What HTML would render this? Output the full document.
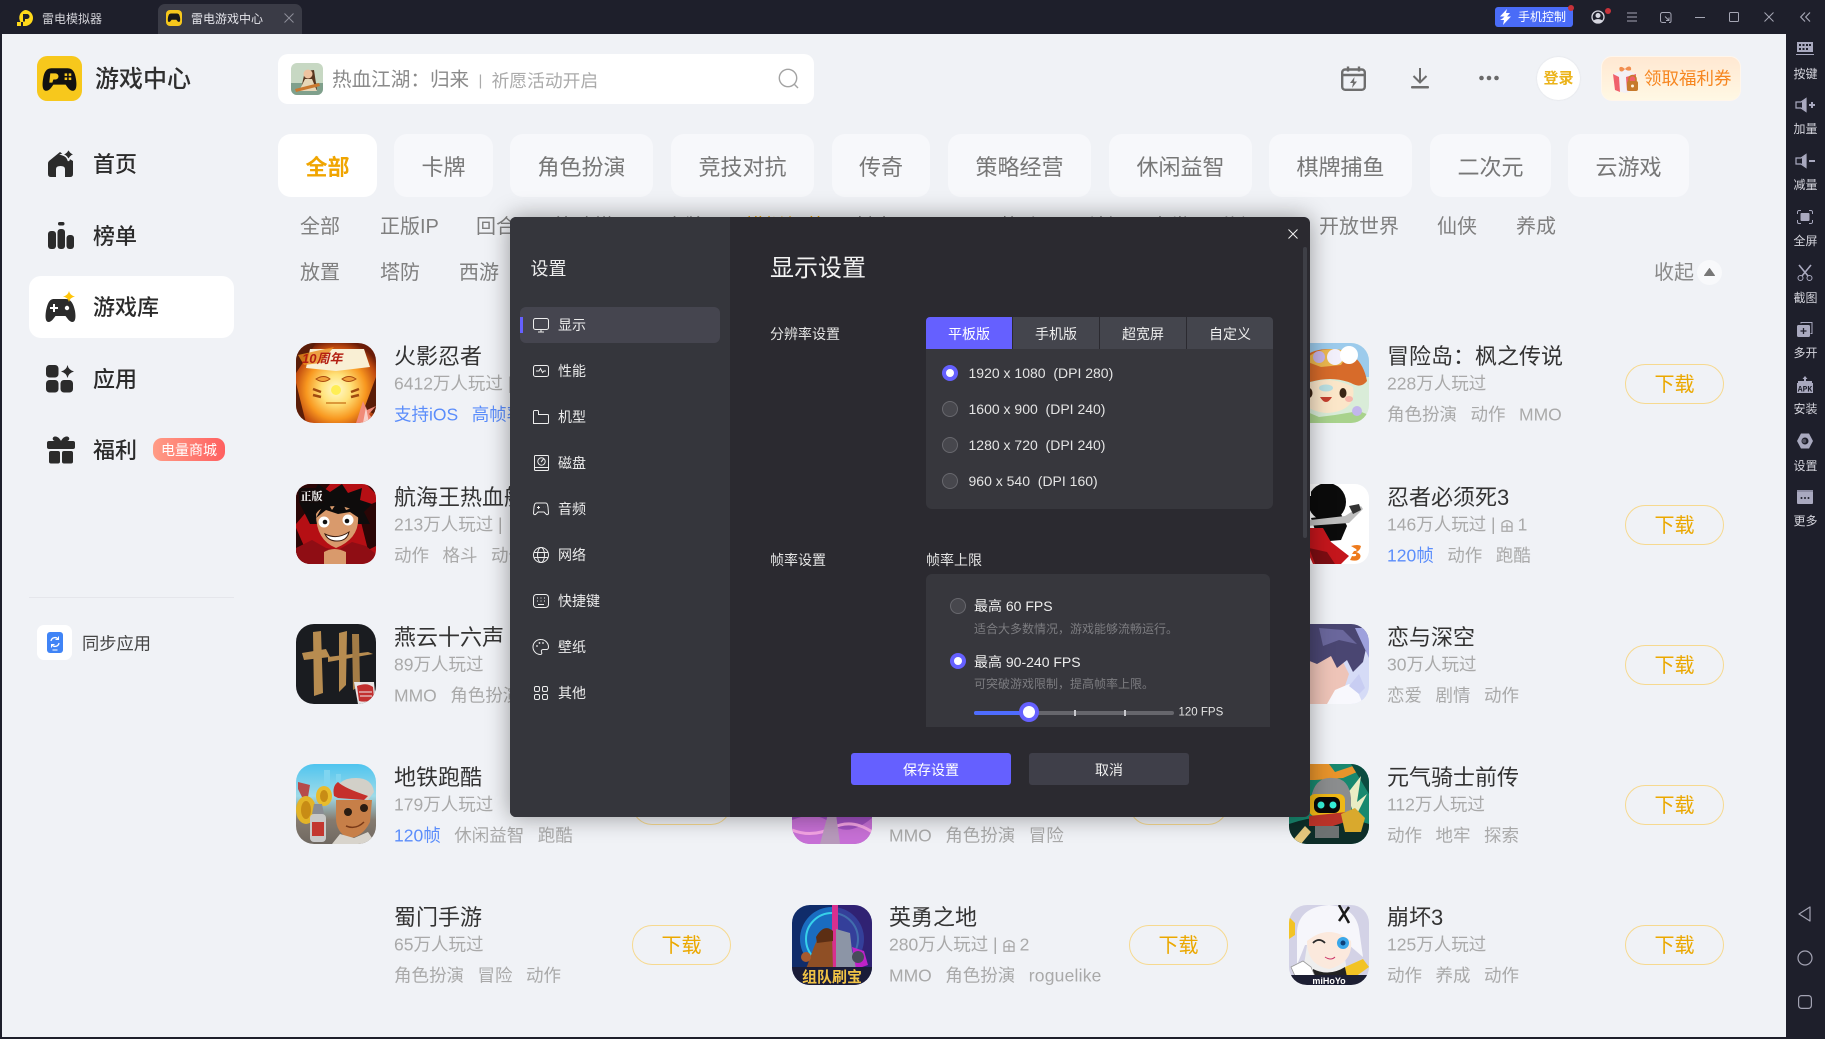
<!DOCTYPE html>
<html lang="zh-CN">
<head>
<meta charset="utf-8">
<title>雷电游戏中心</title>
<style>
html,body{margin:0;padding:0;width:1825px;height:1039px;overflow:hidden;background:#1e1f2b}
body{position:relative;font-family:"Liberation Sans","Noto Sans CJK SC",sans-serif}
.a{position:absolute}
.t{position:absolute;white-space:nowrap;line-height:1;transform:translateY(-50%)}
svg{display:block;overflow:visible}
.a.i{border-radius:18px;overflow:hidden;width:80px;height:80px}
.i svg{overflow:hidden}
.c{position:absolute;top:134px;height:63px;background:#f7f8fb;border-radius:13px;text-align:center;line-height:68px;font-size:22px;color:#777}
.st{font-size:20px;color:#7f7f7f;margin-top:1px}
.gt{font-size:22px;color:#333;margin-top:1px}
.gs{font-size:17.5px;color:#a9a9a9}
.gg{font-size:17.5px;color:#a9a9a9;display:flex;gap:13.5px;margin-top:1px}
.bl{color:#5b8dfb}
.b{position:absolute;width:99px;height:40px;box-sizing:border-box;border:1px solid #f6d98f;border-radius:20px;color:#eba800;font-size:20px;text-align:center;line-height:40px}
.n{font-size:22px;color:#2b2b2b;font-weight:500;margin-top:1px}
.s{position:absolute;left:1786px;width:39px;text-align:center;font-size:12px;color:#d4d4dc;line-height:1;transform:translateY(-50%);margin-top:.5px}
.m{font-size:14px;color:#ececec}
.mt{font-size:14px;color:#e4e4e4}
.r{position:absolute;width:16px;height:16px;border-radius:50%;box-sizing:border-box;background:#47474d;border:1px solid #68686e}
.r.on{background:#6560ff;border:0}
.r.on:after{content:"";position:absolute;left:4px;top:4px;width:8px;height:8px;border-radius:50%;background:#fff}
.tb{position:absolute;top:317px;height:32px;width:86px;background:#44454d;color:#eee;font-size:14px;text-align:center;line-height:34px}
</style>
</head>
<body>
<!-- main background -->
<div class="a" style="left:2px;top:34px;width:1784px;height:1003px;background:#f0f2f6"></div>
<!-- title bar -->
<div class="a" style="left:158px;top:4px;width:144px;height:30px;background:#3a3b46;border-radius:7px 7px 0 0"></div>
<svg class="a" style="left:17px;top:10px" width="16" height="16" viewBox="0 0 16 16"><path d="M8 0a8 8 0 0 1 0 16H6v-4H3.500A8 8 0 0 1 8 0z" fill="#ffd91a"/><rect y="12" width="4" height="4" fill="#ffd91a"/><path d="M6 4h4a2.500 2.500 0 0 1 0 5H8v2.500H6z" fill="#1e1f2b"/></svg>
<div class="t" style="left:42px;top:19px;font-size:12px;color:#d2d2d8">雷电模拟器</div>
<svg class="a" style="left:166px;top:10px" width="16" height="16" viewBox="0 0 16 16"><rect width="16" height="16" rx="4" fill="#f7c81c"/><path d="M5 3.500h6c2 0 2.600 1.800 3 4 .4 2.200.2 4.500-1 4.500-1.200 0-1.900-1.300-2.600-2.200H5.600C4.900 10.700 4.200 12 3 12c-1.200 0-1.400-2.300-1-4.500.4-2.200 1-4 3-4z" fill="#1a1a1a"/></svg>
<div class="t" style="left:191px;top:19px;font-size:12px;color:#e4e4ea">雷电游戏中心</div>
<svg class="a" style="left:284px;top:13px" width="10" height="10" viewBox="0 0 10 10"><path d="M.5.500l9 9M9.500.500l-9 9" stroke="#8d8e99" fill="none"/></svg>

<div class="a" style="left:1495px;top:7px;width:78px;height:20px;background:#4a6cf7;border-radius:3px"></div>
<svg class="a" style="left:1499px;top:9px" width="13" height="16" viewBox="0 0 13 16"><path d="M8 0L1 7.500h4.500L3.500 9.500 1 11h4l-1 5 8-8.500H8l3-3.500H7z" fill="#fff"/></svg>
<div class="t" style="left:1518px;top:17px;font-size:12px;color:#fff">手机控制</div>
<div class="a" style="left:1568px;top:5px;width:6px;height:6px;border-radius:50%;background:#c8323a"></div>
<svg class="a" style="left:1591px;top:10px" width="14" height="14" viewBox="0 0 14 14"><circle cx="7" cy="7" r="6" fill="none" stroke="#d6d6e0" stroke-width="1.300"/><circle cx="7" cy="5.500" r="2.500" fill="#d6d6e0"/><path d="M2.500 11c1-2.500 8-2.500 9 0-2 2.500-7 2.500-9 0z" fill="#d6d6e0"/></svg>
<div class="a" style="left:1605px;top:8px;width:6px;height:6px;border-radius:50%;background:#c8323a"></div>
<svg class="a" style="left:1626px;top:12px" width="12" height="10" viewBox="0 0 12 10"><path d="M1 1h10M1 5h10M1 9h10" stroke="#a5a6b4" stroke-width="1"/></svg>
<svg class="a" style="left:1660px;top:12px" width="12" height="11" viewBox="0 0 12 11"><path d="M7 .500H2.500a2 2 0 0 0-2 2v6a2 2 0 0 0 2 2H6M9 10.500h1a1.500 1.500 0 0 0 1-1.500V2.500a2 2 0 0 0-2-2H7M5 4.500l4 4M9 5.500v3H6" stroke="#a5a6b4" fill="none"/></svg>
<svg class="a" style="left:1695px;top:17px" width="10" height="2"><rect width="10" height="1" fill="#a5a6b4"/></svg>
<svg class="a" style="left:1729px;top:12px" width="10" height="10" viewBox="0 0 10 10"><rect x=".5" y=".5" width="9" height="9" rx="1" stroke="#a5a6b4" fill="none"/></svg>
<svg class="a" style="left:1764px;top:12px" width="10" height="10" viewBox="0 0 10 10"><path d="M.5.500l9 9M9.500.500l-9 9" stroke="#a5a6b4" fill="none"/></svg>
<svg class="a" style="left:1800px;top:12px" width="11" height="10" viewBox="0 0 11 10"><path d="M5 .500L.7 5 5 9.500M10 .500L5.700 5 10 9.500" stroke="#a5a6b4" fill="none" stroke-width="1.200"/></svg>

<!-- sidebar -->
<svg class="a" style="left:37px;top:56px" width="45" height="45" viewBox="0 0 44 44"><rect width="44" height="44" rx="10" fill="#f7c81c"/><path d="M14 12h16c5 0 7 4 8 10 1 6 1 12-3 12-3 0-5-3-7-6H16c-2 3-4 6-7 6-4 0-4-6-3-12 1-6 3-10 8-10z" fill="#111"/><path d="M13 17h5a3 3 0 0 1 0 6h-2l-1 3h-3z" fill="#f7c81c"/><rect x="27" y="17" width="2.500" height="2.500" fill="#f7c81c"/><rect x="31" y="17" width="2.500" height="2.500" fill="#f7c81c"/><rect x="27" y="21" width="2.500" height="2.500" fill="#f7c81c"/><rect x="31" y="21" width="2.500" height="2.500" fill="#f7c81c"/></svg>
<div class="t" style="left:95px;top:79.500px;font-size:24px;color:#2f2f2f;font-weight:500">游戏中心</div>

<svg class="a" style="left:48px;top:148px" width="27" height="30" viewBox="0 0 27 30"><path d="M12 4L1 13Q0 14 0 16V26Q0 29 3 29H8V21Q8 18 12.500 18Q17 18 17 21V29H22Q25 29 25 26V13L20 10Z" fill="#2b2b2b"/><path d="M20.500 0Q21.500 5 27 6.500Q21.500 8 20.500 13Q19.500 8 14 6.500Q19.500 5 20.500 0Z" fill="#2b2b2b" stroke="#f0f2f6" stroke-width="1.500"/></svg>
<div class="t n" style="left:93px;top:164px">首页</div>

<svg class="a" style="left:48px;top:222px" width="26" height="27" viewBox="0 0 26 27"><rect x="0" y="9" width="8" height="18" rx="3" fill="#2b2b2b"/><rect x="9.500" y="7" width="7.500" height="20" rx="3" fill="#2b2b2b"/><rect x="10" y="0" width="6.500" height="3.500" rx="1.700" fill="#2b2b2b"/><rect x="18.500" y="13" width="7.500" height="14" rx="3" fill="#2b2b2b"/></svg>
<div class="t n" style="left:93px;top:236px">榜单</div>

<div class="a" style="left:29px;top:276px;width:205px;height:62px;background:#fff;border-radius:12px"></div>
<svg class="a" style="left:45px;top:291px" width="32" height="32" viewBox="0 0 32 32"><path d="M9 8h12c5 0 7.500 5 9 12 1 6 .5 11-2.500 11-3 0-5-3.500-7-6H10.500c-2 2.500-4 6-7 6-3 0-3.500-5-2.500-11C2.500 13 4 8 9 8z" fill="#2b2b2b"/><path d="M9 13v8M5 17h8" stroke="#fff" stroke-width="2"/><circle cx="22" cy="17" r="2.200" fill="#fff"/><path d="M24 0Q25 4.500 30 5.500Q25 6.500 24 11Q23 6.500 18 5.500Q23 4.500 24 0Z" fill="#ffc50a"/></svg>
<div class="t n" style="left:93px;top:307px">游戏库</div>

<svg class="a" style="left:46px;top:365px" width="28" height="28" viewBox="0 0 28 28"><rect width="12.500" height="12.500" rx="3.500" fill="#2b2b2b"/><rect y="15" width="12.500" height="12.500" rx="3.500" fill="#2b2b2b"/><rect x="14.500" y="15" width="12.500" height="12.500" rx="3.500" fill="#2b2b2b"/><path d="M21.500 0Q22.500 5 28 6.500Q22.500 8 21.500 13Q20.500 8 15 6.500Q20.500 5 21.500 0Z" fill="#2b2b2b"/></svg>
<div class="t n" style="left:93px;top:379px">应用</div>

<svg class="a" style="left:47px;top:436px" width="28" height="28" viewBox="0 0 28 28"><rect x="0" y="5" width="28" height="8" rx="2" fill="#2b2b2b"/><rect x="2" y="15" width="11" height="12.500" rx="2" fill="#2b2b2b"/><rect x="15" y="15" width="11" height="12.500" rx="2" fill="#2b2b2b"/><path d="M14 5C12 1 9 0 7 .7 4.500 2 6 5 8 5zM14 5c2-4 5-5 7-4.300 2.500 1.300 1 4.300-1 4.300z" fill="#2b2b2b"/></svg>
<div class="t n" style="left:93px;top:450px">福利</div>
<div class="a" style="left:153px;top:438px;width:72px;height:23px;border-radius:9px;background:linear-gradient(90deg,#ff9c86,#ff6060);color:#fff;font-size:14px;text-align:center;line-height:24px">电量商城</div>

<div class="a" style="left:29px;top:597px;width:205px;height:1px;background:#e5e6eb"></div>
<div class="a" style="left:37px;top:625px;width:35px;height:35px;border-radius:7px;background:#fff"></div>
<svg class="a" style="left:47px;top:632px" width="16" height="21" viewBox="0 0 16 21"><rect width="16" height="21" rx="3" fill="#4084f6"/><path d="M4 9a4 4 0 0 1 7-2M12 11a4 4 0 0 1-7 2" stroke="#fff" stroke-width="1.300" fill="none"/><path d="M11.500 4.500v3h-3M4.500 15.500v-3h3" stroke="#fff" stroke-width="1" fill="none"/><rect x="5.500" y="17.500" width="5" height="1" fill="#fff"/></svg>
<div class="t" style="left:82px;top:644px;font-size:17.250px;color:#444">同步应用</div>

<!-- search -->
<div class="a" style="left:278px;top:54px;width:536px;height:50px;background:#fff;border-radius:10px"></div>
<svg class="a" style="left:291px;top:63px;border-radius:6px;overflow:hidden" width="32" height="32" viewBox="0 0 32 32"><rect width="32" height="32" fill="#c7d8c3"/><rect y="20" width="32" height="12" fill="#7fa08c"/><path d="M10 26L14 8 23 7l3 20z" fill="#57351f"/><circle cx="17" cy="11" r="4.500" fill="#eec3a0"/><path d="M8 28L14 16h7l5 12z" fill="#e6d6b8"/><path d="M4 26L28 20l1 3-24 6z" fill="#c9782f"/></svg>
<div class="t" style="left:332px;top:80.500px;font-size:19.600px;color:#8a8a8a">热血江湖：归来</div>
<div class="t" style="left:478.500px;top:81px;font-size:15px;color:#aaa">|</div>
<div class="t" style="left:491.500px;top:81.500px;font-size:17.800px;color:#ababab">祈愿活动开启</div>
<svg class="a" style="left:778px;top:68px" width="22" height="22" viewBox="0 0 22 22"><circle cx="10" cy="10" r="8.700" stroke="#a3a3a3" stroke-width="1.400" fill="none"/><path d="M16.500 16.500L20 20" stroke="#a3a3a3" stroke-width="1.400" fill="none"/></svg>

<!-- top right -->
<svg class="a" style="left:1341px;top:66px" width="25" height="25" viewBox="0 0 25 25"><rect x="1.200" y="3.500" width="22.600" height="20.300" rx="3" stroke="#6e6e6e" stroke-width="2.400" fill="none"/><path d="M1.500 9h22M7 0.500v5M18 0.500v5" stroke="#6e6e6e" stroke-width="2.400" fill="none"/><path d="M13.500 11L9 17h3l-1 5 5-6.500h-3z" fill="#6e6e6e"/></svg>
<svg class="a" style="left:1411px;top:68px" width="18" height="21" viewBox="0 0 18 21"><path d="M9 0v14M2.500 8L9 14.500 15.500 8" stroke="#6e6e6e" stroke-width="2" fill="none"/><rect x="0" y="18" width="18" height="2.500" rx="1" fill="#6e6e6e"/></svg>
<svg class="a" style="left:1479px;top:75px" width="20" height="6" viewBox="0 0 20 6"><circle cx="2.500" cy="3" r="2.300" fill="#6a6a6a"/><circle cx="10" cy="3" r="2.300" fill="#6a6a6a"/><circle cx="17.500" cy="3" r="2.300" fill="#6a6a6a"/></svg>
<div class="a" style="left:1537px;top:57px;width:43px;height:43px;border-radius:50%;background:#fff;box-shadow:0 0 2px rgba(0,0,0,.08);color:#ebb31a;font-size:15px;font-weight:700;text-align:center;line-height:44px">登录</div>
<div class="a" style="left:1601px;top:56px;width:140px;height:45px;box-sizing:border-box;border:1px solid #fff6ec;border-radius:11px;background:linear-gradient(180deg,#ffe8d2,#fff8e4)"></div>
<svg class="a" style="left:1612px;top:65px" width="26" height="28" viewBox="0 0 26 28"><path d="M1 9L13 4l11 5v16l-11 3-10-3z" fill="#f3f0f5"/><path d="M1 9l6 3 1 15-5-2zM14 12l10-3v8l-9 9z" fill="#f0616c"/><path d="M13 4C9 0 6 2 8 6c2 1 3 .5 5-2zM13 4c3-4 7-3 6 1-2 1-4 1-6-1z" fill="#f28e4e"/><rect x="15" y="16" width="11" height="10" rx="2" fill="#c77a2c"/><path d="M17 16.500v-2.500a3.500 3.500 0 0 1 7 0v2.500" stroke="#c77a2c" stroke-width="1.600" fill="none"/><circle cx="20.500" cy="21" r="1.500" fill="#fff3df"/></svg>
<div class="t" style="left:1644px;top:78.500px;font-size:17.500px;color:#f6861f">领取福利券</div>

<!-- category chips -->
<div class="c" style="left:278px;width:99px;background:#fff;color:#f0a500;font-weight:700">全部</div>
<div class="c" style="left:394px;width:99px">卡牌</div>
<div class="c" style="left:510px;width:143px">角色扮演</div>
<div class="c" style="left:671px;width:143px">竞技对抗</div>
<div class="c" style="left:832px;width:98px">传奇</div>
<div class="c" style="left:948px;width:143px">策略经营</div>
<div class="c" style="left:1109px;width:143px">休闲益智</div>
<div class="c" style="left:1269px;width:143px">棋牌捕鱼</div>
<div class="c" style="left:1430px;width:121px">二次元</div>
<div class="c" style="left:1568px;width:121px">云游戏</div>

<!-- sub tags -->
<div class="t st" style="left:300px;top:226px">全部</div>
<div class="t st" style="left:380px;top:226px">正版IP</div>
<div class="t st" style="left:476px;top:226px">回合</div>
<div class="t st" style="left:554px;top:226px">策略塔</div>
<div class="t st" style="left:665px;top:226px">卡牌</div>
<div class="t st" style="left:745px;top:226px;color:#f0a500">模拟经营</div>
<div class="t st" style="left:854px;top:226px">射击</div>
<div class="t st" style="left:1000px;top:226px">格斗</div>
<div class="t st" style="left:1085px;top:226px">科幻</div>
<div class="t st" style="left:1150px;top:226px">末世</div>
<div class="t st" style="left:1220px;top:226px">休闲</div>
<div class="t st" style="left:1319px;top:226px">开放世界</div>
<div class="t st" style="left:1437px;top:226px">仙侠</div>
<div class="t st" style="left:1516px;top:226px">养成</div>
<div class="t st" style="left:300px;top:272px">放置</div>
<div class="t st" style="left:380px;top:272px">塔防</div>
<div class="t st" style="left:459px;top:272px">西游</div>
<div class="t st" style="left:1654px;top:272px;color:#8a8a8a">收起</div>
<div class="a" style="left:1697px;top:260px;width:25px;height:25px;border-radius:50%;background:#f8f9fb"></div>
<svg class="a" style="left:1704px;top:268px" width="11" height="8" viewBox="0 0 11 8"><path d="M5.500.500L10.500 7.500H.5z" fill="#777" stroke="#777" stroke-linejoin="round"/></svg>

<!-- GAME ROWS: column 1 -->
<div class="a i" style="left:296px;top:343px"><svg width="80" height="80" viewBox="0 0 80 80"><defs><radialGradient id="n1" cx=".5" cy=".58" r=".62"><stop offset="0" stop-color="#fffbd0"/><stop offset=".3" stop-color="#ffe27a"/><stop offset=".6" stop-color="#f8971f"/><stop offset=".85" stop-color="#c04a0f"/><stop offset="1" stop-color="#6a1c08"/></radialGradient></defs><rect width="80" height="80" fill="url(#n1)"/><path d="M0 0h20L0 30zM0 40l10 40H0zM80 34L68 66l12 6z" fill="#5a1d08"/><path d="M14 6h54l6 18-34 4-30-3z" fill="#f9efd4"/><path d="M2 12L38 4 24 20 8 22z" fill="#e88b1c" opacity=".8"/><text x="6" y="20" font-size="13" font-style="italic" font-weight="700" fill="#b31f12" font-family="Liberation Sans,Noto Sans CJK SC,sans-serif">10周年</text><path d="M20 36q8-5 14 0-7 5-14 0zM46 36q7-5 14 0-8 5-14 0z" fill="#f2a13a" stroke="#a8490e"/><circle cx="40" cy="47" r="5" fill="#ffee55"/><path d="M17 46l8 3M17 52l8 2M63 46l-8 3M63 52l-8 2" stroke="#a04a10" stroke-width="2.500"/><path d="M30 60h20" stroke="#d08024" stroke-width="1.500"/><path d="M62 74l5-16 4 9 9-4-7 8 7 9H60z" fill="#f08a78"/><path d="M67 80l3-16 3 16" fill="#fff" opacity=".6"/></svg></div>
<div class="t gt" style="left:394px;top:356px">火影忍者</div>
<div class="t gs" style="left:394px;top:384px">6412万人玩过 |</div>
<div class="t gg" style="left:394px;top:414px"><span class="bl">支持iOS</span><span class="bl">高帧率</span><span>动作</span></div>

<div class="a i" style="left:296px;top:484px;border-radius:14px"><svg width="80" height="80" viewBox="0 0 80 80"><rect width="80" height="80" fill="#b50f14"/><path d="M0 0h34L0 40zM0 44l16 36H0zM62 26l18-8v44l-8 4zM70 0h10v10z" fill="#2a0606"/><path d="M4 20L2 4 16 12 22 0l12 8L46 0l6 9 14-5-2 12 12 4-8 8 6 12H14z" fill="#0e0c0c"/><path d="M20 30q4-8 20-8t22 10q2 22-22 32-20-8-20-34z" fill="#d99a6c"/><path d="M20 34L30 16l6 10 8-12 6 12 12-4 4 14-12-8-12 2-12-4z" fill="#0e0c0c"/><circle cx="28" cy="38" r="5.500" fill="#fff"/><circle cx="52" cy="36" r="5.500" fill="#fff"/><circle cx="29" cy="38" r="2.300" fill="#111"/><circle cx="51" cy="37" r="2.300" fill="#111"/><path d="M29 50q12 6 24-2-2 9-12 9-9 0-12-7z" fill="#fff" stroke="#3a1c10"/><path d="M0 80V64l16-8 14 8 12 2 14-8 14 4 10 8v10z" fill="#8f0d14"/><path d="M28 68q10-6 22 0v12H28z" fill="#d99a6c"/><rect x="3" y="4" width="25" height="15" fill="#120a0a"/><text x="4.500" y="16" font-size="11" font-weight="700" fill="#fff" font-family="Noto Serif CJK SC,serif">正版</text></svg></div>
<div class="t gt" style="left:394px;top:497px">航海王热血航线</div>
<div class="t gs" style="left:394px;top:525px">213万人玩过 |</div>
<div class="t gg" style="left:394px;top:555px"><span>动作</span><span>格斗</span><span>动作</span></div>

<div class="a i" style="left:296px;top:624px"><svg width="80" height="80" viewBox="0 0 80 80"><rect width="80" height="80" fill="#1a1c20"/><path d="M6 29l24-4 4 8-26 3z" fill="#b78c50"/><path d="M17 8l8-1 2 62-9 3z" fill="#b78c50"/><path d="M32 33l40-5 5 2-45 8z" fill="#b78c50"/><path d="M43 9l8-2-1 54-7 7z" fill="#b78c50"/><path d="M56 10l7 0 1 52-7 4z" fill="#a47c46"/><path d="M58 58h20l2 22H62z" fill="#e8e4e4"/><path d="M61 62q10-4 16 1l1 12q-8 4-15 2z" fill="#c22f2f"/><path d="M63 68h13M64 72h12" stroke="#eee"/></svg></div>
<div class="t gt" style="left:394px;top:637px">燕云十六声</div>
<div class="t gs" style="left:394px;top:665px">89万人玩过</div>
<div class="t gg" style="left:394px;top:695px"><span>MMO</span><span>角色扮演</span><span>动作</span></div>

<div class="a i" style="left:296px;top:764px"><svg width="80" height="80" viewBox="0 0 80 80"><defs><linearGradient id="n4" x1="0" y1="0" x2="0" y2="1"><stop offset="0" stop-color="#4fc4ef"/><stop offset=".4" stop-color="#9edbe9"/><stop offset=".7" stop-color="#857b70"/><stop offset="1" stop-color="#6f6860"/></linearGradient></defs><rect width="80" height="80" fill="url(#n4)"/><path d="M28 6h6v16h-6zM40 10h5v12h-5z" fill="#7fd5f0"/><path d="M2 18l12 3-2 12-6 0-4-8z" fill="#b64b4b"/><ellipse cx="10" cy="46" rx="10" ry="14" fill="#e3b428"/><ellipse cx="10" cy="46" rx="5" ry="9" fill="#c88c15"/><ellipse cx="28" cy="32" rx="8" ry="10" fill="#e8bc2c"/><ellipse cx="28" cy="32" rx="4" ry="6" fill="#c88c15"/><rect x="14" y="50" width="16" height="28" rx="4" fill="#c8c8c8"/><path d="M16 58h12v14H16z" fill="#c3362f"/><path d="M18 40h8l2 10H16z" fill="#8a8d94"/><path d="M38 32q2-18 22-18 16 0 18 14l-6 8z" fill="#d2d0c8"/><path d="M38 32q-2-10 4-14 6 6 30 14l-4 4-26-2z" fill="#c5302b"/><path d="M40 36h36l-2 22q-8 16-22 16-12-6-12-20z" fill="#c77f48"/><circle cx="52" cy="48" r="4" fill="#2a1c12"/><circle cx="68" cy="44" r="4" fill="#2a1c12"/><path d="M50 62q10 4 18-4" stroke="#7a3a18" stroke-width="1.500" fill="none"/><path d="M36 80l8-10 14 4 14-6 8 12z" fill="#d8d4cc"/></svg></div>
<div class="t gt" style="left:394px;top:777px">地铁跑酷</div>
<div class="t gs" style="left:394px;top:805px">179万人玩过</div>
<div class="t gg" style="left:394px;top:835px"><span class="bl">120帧</span><span>休闲益智</span><span>跑酷</span></div>
<div class="b" style="left:632px;top:785px">下载</div>

<div class="t gt" style="left:394px;top:917px">蜀门手游</div>
<div class="t gs" style="left:394px;top:945px">65万人玩过</div>
<div class="t gg" style="left:394px;top:975px"><span>角色扮演</span><span>冒险</span><span>动作</span></div>
<div class="b" style="left:632px;top:925px">下载</div>

<!-- column 2 -->
<div class="a i" style="left:792px;top:764px"><svg width="80" height="80" viewBox="0 0 80 80"><rect width="80" height="80" fill="#a050c0"/><path d="M0 56q24-10 40 4t40-6v26H0z" fill="#c770d6"/><path d="M0 66q20 8 40-2t40 4" stroke="#f5a5e5" stroke-width="3" fill="none"/><path d="M28 80l8-30h8l4 30z" fill="#b89abc"/></svg></div>
<div class="t gg" style="left:889px;top:835px"><span>MMO</span><span>角色扮演</span><span>冒险</span></div>
<div class="b" style="left:1129px;top:785px">下载</div>

<div class="a i" style="left:792px;top:905px"><svg width="80" height="80" viewBox="0 0 80 80"><rect width="80" height="80" fill="#102c6a"/><circle cx="40" cy="34" r="32" fill="#1a6cc0"/><circle cx="40" cy="34" r="26" fill="none" stroke="#37d1ea" stroke-width="2"/><path d="M42 0h38v80H42z" fill="#4a1c7a" opacity=".55"/><path d="M40 0h6v80h-6z" fill="#d7308f"/><path d="M14 64l8-22q6-16 18-14l1 36z" fill="#8f4f25"/><path d="M24 32q8-14 17-6v10l-16 2z" fill="#5c2e14"/><path d="M44 24l14 4 2 18 6 18H44z" fill="#8c95a6"/><path d="M60 42l12 4 4 14-12 4z" fill="#c022c9"/><circle cx="66" cy="52" r="6" fill="#484c5a"/><circle cx="14" cy="52" r="5" fill="#a75a2e"/><rect y="62" width="80" height="18" fill="#1a1c38"/><text x="40" y="77" text-anchor="middle" font-size="15" font-weight="700" fill="#f1c345" font-family="Noto Sans CJK SC,sans-serif">组队刷宝</text></svg></div>
<div class="t gt" style="left:889px;top:917px">英勇之地</div>
<div class="t gs" style="left:889px;top:945px;display:flex;align-items:center;gap:4px"><span>280万人玩过 |</span><svg width="14" height="14" viewBox="0 0 14 14"><path d="M2 5q5-5 10 0v8H2zM2 8.500h10M7 5v8" stroke="#a9a9a9" stroke-width="1.300" fill="none"/></svg><span>2</span></div>
<div class="t gg" style="left:889px;top:975px"><span>MMO</span><span>角色扮演</span><span style="letter-spacing:.2px">roguelike</span></div>
<div class="b" style="left:1129px;top:925px">下载</div>

<!-- column 3 -->
<div class="a i" style="left:1289px;top:343px"><svg width="80" height="80" viewBox="0 0 80 80"><rect width="80" height="80" fill="#d9ecd8"/><path d="M0 0h80v34H0z" fill="#9ccbec"/><path d="M4 38Q8 6 40 6t38 32q-6 8-16 2-20-8-44 0-8 6-14-2z" fill="#d76b2a"/><path d="M16 18q8-12 28-12 10 0 16 4l-8 12-20 2z" fill="#ecb84e"/><circle cx="46" cy="14" r="8" fill="#f3f0fb"/><circle cx="60" cy="12" r="9" fill="#fff"/><circle cx="30" cy="14" r="6" fill="#c6b4e8"/><path d="M12 44q26-14 52 0 4 24-26 26-28-2-26-26z" fill="#fbe6c9"/><ellipse cx="20" cy="50" rx="3.500" ry="5" fill="#3a2414"/><ellipse cx="54" cy="50" rx="3.500" ry="5" fill="#3a2414"/><ellipse cx="37" cy="45" rx="7" ry="3.500" fill="#b9dfe2"/><path d="M31 54q6 10 12 0z" fill="#c43f2e"/><ellipse cx="13" cy="57" rx="4" ry="3" fill="#f7b4a8"/><ellipse cx="60" cy="56" rx="4" ry="3" fill="#f7b4a8"/><path d="M0 72l16-4 14 6 16-2 24-4 10 4v8H0z" fill="#a8d28c"/><circle cx="68" cy="68" r="5" fill="#c2b6ec"/></svg></div>
<div class="t gt" style="left:1387px;top:356px">冒险岛：枫之传说</div>
<div class="t gs" style="left:1387px;top:384px">228万人玩过</div>
<div class="t gg" style="left:1387px;top:414px"><span>角色扮演</span><span>动作</span><span>MMO</span></div>
<div class="b" style="left:1625px;top:364px">下载</div>

<div class="a i" style="left:1289px;top:484px;border-radius:14px"><svg width="80" height="80" viewBox="0 0 80 80"><rect width="80" height="80" fill="#fff"/><circle cx="38" cy="18" r="19" fill="#0b0b0b"/><path d="M16 4h6v8h-6z" fill="#fff"/><path d="M22 34l30-4 6 12-6 14-22 2z" fill="#0b0b0b"/><path d="M4 38l52-6 16-10 2 3-14 14-56 4z" fill="#bdbdbd"/><path d="M4 44h30l8 14 18 14-8 8H24L14 58z" fill="#c4161c"/><path d="M20 64l18 4 8 12H26z" fill="#7d0d12"/><path d="M60 22l10-2 2 6-8 4z" fill="#333"/><path d="M62 62q7-2 10 0-1 5-5 6 6 2 4 6t-10 2l2-4q5 1 4-2h-4l2-3q4 0 2-2z" fill="#ee7a1c"/></svg></div>
<div class="t gt" style="left:1387px;top:497px">忍者必须死3</div>
<div class="t gs" style="left:1387px;top:525px;display:flex;align-items:center;gap:4px"><span>146万人玩过 |</span><svg width="14" height="14" viewBox="0 0 14 14"><path d="M2 5q5-5 10 0v8H2zM2 8.500h10M7 5v8" stroke="#a9a9a9" stroke-width="1.300" fill="none"/></svg><span>1</span></div>
<div class="t gg" style="left:1387px;top:555px"><span class="bl">120帧</span><span>动作</span><span>跑酷</span></div>
<div class="b" style="left:1625px;top:505px">下载</div>

<div class="a i" style="left:1289px;top:624px"><svg width="80" height="80" viewBox="0 0 80 80"><rect width="80" height="80" fill="#d5dbf6"/><path d="M0 30h50l10 20-6 18-14 12H0z" fill="#eec4b8"/><path d="M0 0h80l-2 20-4 18-10 10-6-12-10 8-6-12-14 8-10-4-18 4z" fill="#4a4672"/><path d="M30 4l24 2 14 14-18-4-16 6z" fill="#6a679c"/><path d="M66 4l14 0v30z" fill="#9da0dc"/><path d="M38 80l8-14 14-6 8 6 6 14z" fill="#f8f8fd"/><path d="M60 62l10-12 6 14-6 6z" fill="#c8cdf2"/></svg></div>
<div class="t gt" style="left:1387px;top:637px">恋与深空</div>
<div class="t gs" style="left:1387px;top:665px">30万人玩过</div>
<div class="t gg" style="left:1387px;top:695px"><span>恋爱</span><span>剧情</span><span>动作</span></div>
<div class="b" style="left:1625px;top:645px">下载</div>

<div class="a i" style="left:1289px;top:764px"><svg width="80" height="80" viewBox="0 0 80 80"><rect width="80" height="80" fill="#18886f"/><path d="M0 60q40-14 80 0v20H0z" fill="#0d2d28"/><path d="M0 0h40l6 8 18-6 4 6-14 6-28 2-26 0z" fill="#e8942b"/><path d="M62 0h18v30z" fill="#0b4c40"/><path d="M58 30l14-18-4 26 10-8-12 24z" fill="#e9ecc4"/><path d="M22 34q4-22 22-20 16 0 18 20v14H22z" fill="#8b8d8e"/><rect x="20" y="30" width="36" height="22" rx="6" fill="#efb816"/><rect x="25" y="33" width="26" height="16" rx="6" fill="#0a0a0a"/><circle cx="32" cy="41" r="3.500" fill="#35efd7"/><circle cx="44" cy="41" r="3.500" fill="#35efd7"/><path d="M20 52l38-4 4 8-18 6-24 0z" fill="#ba3329"/><rect x="26" y="62" width="24" height="12" fill="#6d7272"/><path d="M52 50l14-6 10 10-4 14-16 0z" fill="#d9a92d"/><path d="M4 76l12-14 6 6-10 12z" fill="#e6c97e"/></svg></div>
<div class="t gt" style="left:1387px;top:777px">元气骑士前传</div>
<div class="t gs" style="left:1387px;top:805px">112万人玩过</div>
<div class="t gg" style="left:1387px;top:835px"><span>动作</span><span>地牢</span><span>探索</span></div>
<div class="b" style="left:1625px;top:785px">下载</div>

<div class="a i" style="left:1289px;top:905px"><svg width="80" height="80" viewBox="0 0 80 80"><rect width="80" height="80" fill="#eee"/><path d="M0 0h80v80H60l-6-40-36 0-6 40H0z" fill="#d3d2e6"/><path d="M8 26Q10 2 40 0q26 2 30 24l4 28-14-12H16L8 60z" fill="#f6f6fb"/><path d="M18 36q22-18 44 0 2 22-22 28-22-4-22-28z" fill="#fbe9dd"/><path d="M0 12l6 6v12L0 34z" fill="#f2c325"/><path d="M50 0l10 18M60 2L50 16" stroke="#1a1a1a" stroke-width="2.500"/><circle cx="54" cy="38" r="6" fill="#39a7ea"/><circle cx="54" cy="38" r="2.500" fill="#0c3f78"/><path d="M24 38q6-6 12 0" stroke="#2a2a2a" stroke-width="1.800" fill="none"/><path d="M36 52q6 4 10 0" stroke="#c36" fill="none"/><path d="M24 64q16 8 32-2l4 14H24z" fill="#222"/><path d="M56 62l18-8 6 8-14 10-8 0z" fill="#f2c325"/><path d="M2 62l12-6 8 6 6 14-18 4z" fill="#fff" stroke="#999" stroke-width=".8"/><rect y="70" width="80" height="10" fill="#1d1f33"/><text x="40" y="79" text-anchor="middle" font-size="9" font-weight="700" fill="#fff">miHoYo</text></svg></div>
<div class="t gt" style="left:1387px;top:917px">崩坏3</div>
<div class="t gs" style="left:1387px;top:945px">125万人玩过</div>
<div class="t gg" style="left:1387px;top:975px"><span>动作</span><span>养成</span><span>动作</span></div>
<div class="b" style="left:1625px;top:925px">下载</div>

<!-- right tool panel -->
<div class="a" style="left:1786px;top:34px;width:39px;height:1005px;background:#1e1f2b"></div>
<svg class="a" style="left:1796px;top:42px" width="18" height="13" viewBox="0 0 18 13"><path d="M1 0h16v10H1z" fill="#a9a9bf"/><g fill="#1e1f2b"><rect x="3" y="2" width="2" height="2"/><rect x="6.500" y="2" width="2" height="2"/><rect x="10" y="2" width="2" height="2"/><rect x="13" y="2" width="2" height="2"/><rect x="3" y="6" width="2" height="2"/><rect x="6.500" y="6" width="2" height="2"/><rect x="10" y="6" width="2" height="2"/></g><rect y="12" width="18" height="1" fill="#a9a9bf"/></svg>
<div class="s" style="top:73px">按键</div>
<svg class="a" style="left:1795px;top:98px" width="20" height="14" viewBox="0 0 20 14"><path d="M1 4h5l5-3.500v13L6 10H1z" stroke="#a9a9bf" stroke-width="1.200" fill="none"/><path d="M7 4l4-3v12l-4-3z" fill="#a9a9bf"/><path d="M14 7h6M17 4v6" stroke="#a9a9bf" stroke-width="2"/></svg>
<div class="s" style="top:128px">加量</div>
<svg class="a" style="left:1795px;top:154px" width="20" height="14" viewBox="0 0 20 14"><path d="M1 4h5l5-3.500v13L6 10H1z" stroke="#a9a9bf" stroke-width="1.200" fill="none"/><path d="M7 4l4-3v12l-4-3z" fill="#a9a9bf"/><path d="M14 7h6" stroke="#a9a9bf" stroke-width="2"/></svg>
<div class="s" style="top:184px">减量</div>
<svg class="a" style="left:1797px;top:210px" width="16" height="14" viewBox="0 0 16 14"><path d="M.5 4V2A1.500 1.500 0 0 1 2 .5h2M12 .5h2A1.500 1.500 0 0 1 15.500 2v2M15.500 10v2a1.500 1.500 0 0 1-1.500 1.500h-2M4 13.500H2A1.500 1.500 0 0 1 .5 12v-2" stroke="#a9a9bf" fill="none"/><rect x="3.500" y="3" width="9" height="8" rx="1" fill="#a9a9bf"/></svg>
<div class="s" style="top:240px">全屏</div>
<svg class="a" style="left:1797px;top:265px" width="16" height="16" viewBox="0 0 16 16"><path d="M2 0l9 11M14 0L5 11" stroke="#a9a9bf" stroke-width="1.600"/><circle cx="3.500" cy="13" r="2.500" stroke="#a9a9bf" fill="none"/><circle cx="12.500" cy="13" r="2.500" stroke="#a9a9bf" fill="none"/></svg>
<div class="s" style="top:297px">截图</div>
<svg class="a" style="left:1797px;top:322px" width="16" height="15" viewBox="0 0 16 15"><path d="M4 1.500V.5h11v11h-1.500" stroke="#a9a9bf" fill="none"/><rect x="0" y="3" width="13" height="12" rx="1.500" fill="#a9a9bf"/><path d="M6.500 6v6M3.500 9h6" stroke="#1e1f2b" stroke-width="1.300"/></svg>
<div class="s" style="top:352px">多开</div>
<svg class="a" style="left:1797px;top:376px" width="16" height="17" viewBox="0 0 16 17"><path d="M8 0l2.500 3h-5zM7 2h2v3H7zM1 5h14v2H1z" fill="#a9a9bf"/><rect x="0" y="7" width="16" height="10" fill="#a9a9bf"/><text x="8" y="15.500" text-anchor="middle" font-size="8" font-weight="700" fill="#1e1f2b" font-family="Liberation Mono,monospace">APK</text></svg>
<div class="s" style="top:408.500px">安装</div>
<svg class="a" style="left:1797px;top:433px" width="16" height="16" viewBox="0 0 16 16"><path d="M4 .5h8L16 8l-4 7.500H4L0 8z" fill="#a9a9bf"/><circle cx="8" cy="8" r="3.500" fill="#1e1f2b"/><circle cx="7.200" cy="8" r="2" fill="#a9a9bf" opacity=".4"/></svg>
<div class="s" style="top:465px">设置</div>
<svg class="a" style="left:1797px;top:490px" width="16" height="14" viewBox="0 0 16 14"><rect width="16" height="14" rx="1" fill="#a9a9bf"/><rect y="0" width="16" height="2" fill="#8c8ca2"/><circle cx="4.500" cy="8" r="1" fill="#1e1f2b"/><circle cx="8" cy="8" r="1" fill="#1e1f2b"/><circle cx="11.500" cy="8" r="1" fill="#1e1f2b"/></svg>
<div class="s" style="top:520px">更多</div>
<svg class="a" style="left:1798px;top:906px" width="13" height="16" viewBox="0 0 13 16"><path d="M12 1v14L1 8z" stroke="#a3a3b3" stroke-width="1.200" fill="none" stroke-linejoin="round"/></svg>
<svg class="a" style="left:1797px;top:950px" width="16" height="16" viewBox="0 0 16 16"><circle cx="8" cy="8" r="7" stroke="#a3a3b3" stroke-width="1.200" fill="none"/></svg>
<svg class="a" style="left:1798px;top:995px" width="14" height="14" viewBox="0 0 14 14"><rect x=".6" y=".6" width="12.800" height="12.800" rx="3" stroke="#a3a3b3" stroke-width="1.200" fill="none"/></svg>

<!-- modal -->
<div class="a" style="left:510px;top:217px;width:800px;height:600px;background:#2b2a30;border-radius:6px;box-shadow:0 0 24px rgba(0,0,0,.38)"></div>
<div class="a" style="left:510px;top:217px;width:220px;height:600px;background:#35363c;border-radius:6px 0 0 6px"></div>
<div class="t" style="left:530.500px;top:269px;font-size:18px;color:#eee">设置</div>
<div class="a" style="left:520px;top:307px;width:200px;height:36px;background:#45454f;border-radius:6px"></div>
<div class="a" style="left:520px;top:317px;width:3px;height:16px;background:#6560ff"></div>

<svg class="a" style="left:533px;top:317px" width="16" height="16" viewBox="0 0 16 16"><rect x=".5" y="1.500" width="15" height="11" rx="2" stroke="#eee" fill="none"/><path d="M5 15h6M8 12.500V15" stroke="#eee"/></svg>
<div class="t m" style="left:558px;top:325px">显示</div>
<svg class="a" style="left:533px;top:363px" width="16" height="16" viewBox="0 0 16 16"><rect x=".5" y="2.500" width="15" height="11" rx="2" stroke="#eee" fill="none"/><path d="M3 8h3l1.500-2.500 2 4L11 8h2" stroke="#eee" fill="none"/></svg>
<div class="t m" style="left:558px;top:371px">性能</div>
<svg class="a" style="left:533px;top:409px" width="16" height="16" viewBox="0 0 16 16"><path d="M.5 14.500V2.500a1 1 0 0 1 1-1h3a1 1 0 0 1 1 1v3h9a1 1 0 0 1 1 1v7a1 1 0 0 1-1 1z" stroke="#eee" fill="none"/></svg>
<div class="t m" style="left:558px;top:417px">机型</div>
<svg class="a" style="left:534px;top:455px" width="15" height="16" viewBox="0 0 15 16"><rect x=".5" y=".5" width="14" height="15" rx="1" stroke="#eee" fill="none"/><circle cx="7.500" cy="6.500" r="3.700" stroke="#eee" fill="none"/><path d="M7 7l3-3.500M1 12.500h13" stroke="#eee" fill="none"/></svg>
<div class="t m" style="left:558px;top:463px">磁盘</div>
<svg class="a" style="left:533px;top:501px" width="16" height="16" viewBox="0 0 16 16"><path d="M3.500 2h9c1.500 0 2 1 2.500 4l.5 6c0 2-2 2-2.500 1L11 11H5l-2 2c-.5 1-2.500 1-2.500-1L1 6C1.500 3 2 2 3.500 2z" stroke="#eee" fill="none"/><path d="M4 6.500h3M5.500 5v3M10 6h.1M12 6h.1" stroke="#eee"/></svg>
<div class="t m" style="left:558px;top:509px">音频</div>
<svg class="a" style="left:533px;top:547px" width="16" height="16" viewBox="0 0 16 16"><circle cx="8" cy="8" r="7.500" stroke="#eee" fill="none"/><ellipse cx="8" cy="8" rx="3.500" ry="7.500" stroke="#eee" fill="none"/><path d="M1 5.500h14M1 10.500h14" stroke="#eee"/></svg>
<div class="t m" style="left:558px;top:555px">网络</div>
<svg class="a" style="left:533px;top:593px" width="16" height="16" viewBox="0 0 16 16"><rect x=".5" y="1.500" width="15" height="13" rx="3" stroke="#eee" fill="none"/><path d="M4 5h1M7.500 5h1M11 5h1M4 8h1M7.500 8h1M11 8h1M5 11.500h6" stroke="#eee"/></svg>
<div class="t m" style="left:558px;top:601px">快捷键</div>
<svg class="a" style="left:533px;top:639px" width="16" height="16" viewBox="0 0 16 16"><path d="M8 .5a7.500 7.500 0 0 0-1 15c2 .2 2-1.500 1.500-2.500-.5-1.500 0-2.500 2-2.500h3c1.500 0 2-1.500 2-2.500C15.500 4 12 .5 8 .5z" stroke="#eee" fill="none"/><circle cx="4" cy="7" r=".9" fill="#eee"/><circle cx="6.500" cy="4" r=".9" fill="#eee"/><circle cx="10" cy="4" r=".9" fill="#eee"/></svg>
<div class="t m" style="left:558px;top:647px">壁纸</div>
<svg class="a" style="left:534px;top:686px" width="14" height="14" viewBox="0 0 14 14"><rect x=".5" y=".5" width="5" height="5" rx="1.500" stroke="#eee" fill="none"/><rect x="8.500" y=".5" width="5" height="5" rx="1.500" stroke="#eee" fill="none"/><rect x=".5" y="8.500" width="5" height="5" rx="1.500" stroke="#eee" fill="none"/><rect x="8.500" y="8.500" width="5" height="5" rx="1.500" stroke="#eee" fill="none"/></svg>
<div class="t m" style="left:558px;top:693px">其他</div>

<div class="t" style="left:770px;top:269px;font-size:24px;color:#f2f2f2">显示设置</div>
<svg class="a" style="left:1288px;top:229px" width="10" height="10" viewBox="0 0 10 10"><path d="M.5.500l9 9M9.500.500l-9 9" stroke="#f2f2f2" fill="none"/></svg>
<div class="a" style="left:1303px;top:247px;width:4px;height:291px;background:#3e3f46;border-radius:2px"></div>

<div class="t mt" style="left:770px;top:334px">分辨率设置</div>
<div class="a" style="left:926px;top:349px;width:347px;height:160px;background:#37373d;border-radius:0 0 6px 6px"></div>
<div class="tb" style="left:926px;background:#6560ff;color:#fff;border-radius:4px 0 0 0">平板版</div>
<div class="tb" style="left:1013px">手机版</div>
<div class="tb" style="left:1100px">超宽屏</div>
<div class="tb" style="left:1187px;border-radius:0 4px 0 0">自定义</div>
<div class="r on" style="left:942px;top:365px"></div>
<div class="t mt" style="left:968.500px;top:373px">1920 x 1080&nbsp; (DPI 280)</div>
<div class="r" style="left:942px;top:401px"></div>
<div class="t mt" style="left:968.500px;top:409px">1600 x 900&nbsp; (DPI 240)</div>
<div class="r" style="left:942px;top:437px"></div>
<div class="t mt" style="left:968.500px;top:445px">1280 x 720&nbsp; (DPI 240)</div>
<div class="r" style="left:942px;top:473px"></div>
<div class="t mt" style="left:968.500px;top:481px">960 x 540&nbsp; (DPI 160)</div>

<div class="t mt" style="left:770px;top:560px">帧率设置</div>
<div class="t mt" style="left:926px;top:560px">帧率上限</div>
<div class="a" style="left:926px;top:574px;width:344px;height:153px;background:#37373d;border-radius:6px 6px 0 0"></div>
<div class="r" style="left:950px;top:598px"></div>
<div class="t mt" style="left:974px;top:606px;color:#eee">最高 60 FPS</div>
<div class="t" style="left:974px;top:629px;font-size:12px;color:#7c7c80">适合大多数情况，游戏能够流畅运行。</div>
<div class="r on" style="left:950px;top:653px"></div>
<div class="t mt" style="left:974px;top:661.500px;color:#eee">最高 90-240 FPS</div>
<div class="t" style="left:974px;top:684px;font-size:12px;color:#7c7c80">可突破游戏限制，提高帧率上限。</div>
<div class="a" style="left:974px;top:711px;width:200px;height:4px;background:#66666c;border-radius:2px"></div>
<div class="a" style="left:974px;top:711px;width:55px;height:4px;background:#4e6cff;border-radius:2px"></div>
<div class="a" style="left:1074px;top:710px;width:2px;height:6px;background:#c8c8cc"></div>
<div class="a" style="left:1124px;top:710px;width:2px;height:6px;background:#c8c8cc"></div>
<div class="a" style="left:1019px;top:702px;width:20px;height:20px;border-radius:50%;background:#6560ff"></div>
<div class="a" style="left:1023px;top:706px;width:12px;height:12px;border-radius:50%;background:#fff"></div>
<div class="t" style="left:1178.500px;top:713px;font-size:11.500px;color:#e4e4e4">120 FPS</div>

<div class="a" style="left:851px;top:753px;width:160px;height:32px;background:#6560ff;border-radius:3px;color:#fff;font-size:14px;text-align:center;line-height:35px">保存设置</div>
<div class="a" style="left:1029px;top:753px;width:160px;height:32px;background:#3f3f49;border-radius:3px;color:#f0f0f0;font-size:14px;text-align:center;line-height:35px">取消</div>
</body>
</html>
